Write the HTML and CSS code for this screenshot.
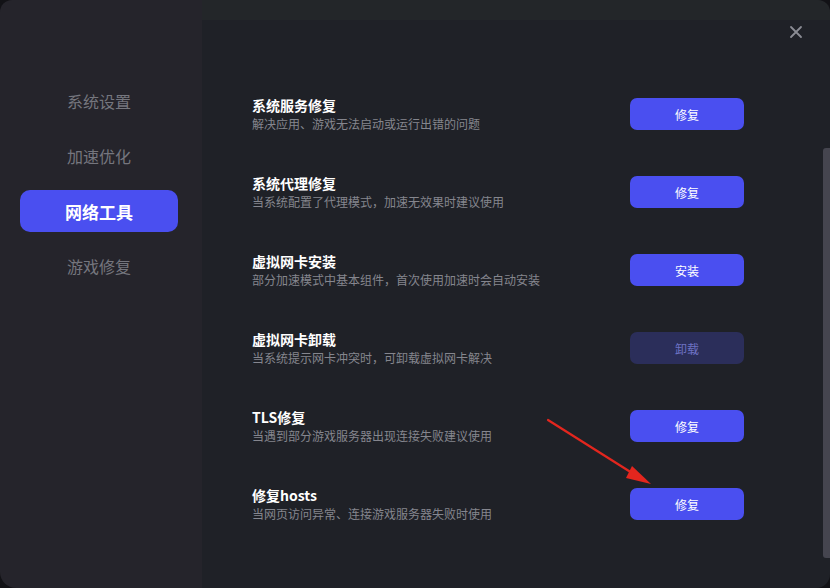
FILE: index.html
```html
<!DOCTYPE html>
<html lang="zh-CN">
<head>
<meta charset="UTF-8">
<meta name="viewport" content="width=device-width, initial-scale=1.0">
<title>网络工具</title>
<link rel="stylesheet" href="styles.css">
</head>
<body>

<div class="window">
  <div class="sidebar">
    <div class="nav-item">系统设置</div>
    <div class="nav-item">加速优化</div>
    <div class="nav-item active">网络工具</div>
    <div class="nav-item">游戏修复</div>
  </div>

  <div class="main">
    <button class="close-btn" aria-label="关闭">
      <svg width="14" height="14" viewBox="0 0 14 14">
        <path d="M2 2 L12 12 M12 2 L2 12" stroke="#8b8c94" stroke-width="1.8" stroke-linecap="round"/>
      </svg>
    </button>

    <div class="tool-list">
      <div class="tool-row">
        <div class="tool-info">
          <div class="tool-title">系统服务修复</div>
          <div class="tool-desc">解决应用、游戏无法启动或运行出错的问题</div>
        </div>
        <button class="tool-btn">修复</button>
      </div>
      <div class="tool-row">
        <div class="tool-info">
          <div class="tool-title">系统代理修复</div>
          <div class="tool-desc">当系统配置了代理模式，加速无效果时建议使用</div>
        </div>
        <button class="tool-btn">修复</button>
      </div>
      <div class="tool-row">
        <div class="tool-info">
          <div class="tool-title">虚拟网卡安装</div>
          <div class="tool-desc">部分加速模式中基本组件，首次使用加速时会自动安装</div>
        </div>
        <button class="tool-btn">安装</button>
      </div>
      <div class="tool-row">
        <div class="tool-info">
          <div class="tool-title">虚拟网卡卸载</div>
          <div class="tool-desc">当系统提示网卡冲突时，可卸载虚拟网卡解决</div>
        </div>
        <button class="tool-btn disabled">卸载</button>
      </div>
      <div class="tool-row">
        <div class="tool-info">
          <div class="tool-title">TLS修复</div>
          <div class="tool-desc">当遇到部分游戏服务器出现连接失败建议使用</div>
        </div>
        <button class="tool-btn">修复</button>
      </div>
      <div class="tool-row">
        <div class="tool-info">
          <div class="tool-title">修复hosts</div>
          <div class="tool-desc">当网页访问异常、连接游戏服务器失败时使用</div>
        </div>
        <button class="tool-btn">修复</button>
      </div>
    </div>

    <div class="scrollbar"></div>

    <!-- annotation arrow -->
    <svg class="arrow" width="130" height="90" viewBox="0 0 130 90">
      <path d="M8 6 L100 64" stroke="#e3261e" stroke-width="2.2" stroke-linecap="round"/>
      <path d="M92 52 L111 70 L86 64 Z" fill="#e3261e"/>
    </svg>
  </div>
</div>

</body>
</html>
```

FILE: styles.css
```css
* {
  box-sizing: border-box;
  font-family: "Noto Sans CJK SC", "Noto Sans", sans-serif;
}
html, body {
  margin: 0;
  height: 100%;
}
body {
  background: #121216;
  overflow: hidden;
}
.window {
  display: flex;
  width: 830px;
  height: 588px;
  border-radius: 12px 12px 14px 16px;
  overflow: hidden;
}

.sidebar {
  width: 202px;
  flex-shrink: 0;
  background: #25242b;
  padding-top: 80px;
  display: flex;
  flex-direction: column;
  gap: 13px;
}
.nav-item {
  margin-left: 20px;
  width: 158px;
  height: 42px;
  border-radius: 10px;
  display: flex;
  align-items: center;
  justify-content: center;
  font-size: 16px;
  color: #75767e;
}
.nav-item.active {
  background: #4a4ff0;
  color: #fff;
  font-weight: bold;
  font-size: 17px;
}

.main {
  flex: 1;
  position: relative;
  background: linear-gradient(#232629 0, #232629 20px, #1f2127 20px);
}
.close-btn {
  position: absolute;
  top: 25px;
  left: 587px;
  width: 14px;
  height: 14px;
  padding: 0;
  border: none;
  background: none;
  display: flex;
}

.tool-list {
  padding: 95px 86px 0 50px;
  display: flex;
  flex-direction: column;
  gap: 40px;
}
.tool-row {
  display: flex;
  align-items: center;
  justify-content: space-between;
  height: 38px;
}
.tool-title {
  font-size: 14px;
  line-height: 20px;
  font-weight: bold;
  color: #fff;
}
.tool-desc {
  font-size: 12px;
  line-height: 18px;
  color: #85868e;
}
.tool-btn {
  width: 114px;
  height: 32px;
  border: none;
  border-radius: 7px;
  background: #4a4ff0;
  color: #fff;
  font-size: 12px;
  cursor: pointer;
}
.tool-btn.disabled {
  background: #2b2e5a;
  color: #6e72c4;
}

.scrollbar {
  position: absolute;
  right: 0;
  top: 148px;
  width: 7px;
  height: 410px;
  background: #45454f;
  border-radius: 3px 0 0 3px;
}

.arrow {
  position: absolute;
  left: 338px;
  top: 414px;
}
```
